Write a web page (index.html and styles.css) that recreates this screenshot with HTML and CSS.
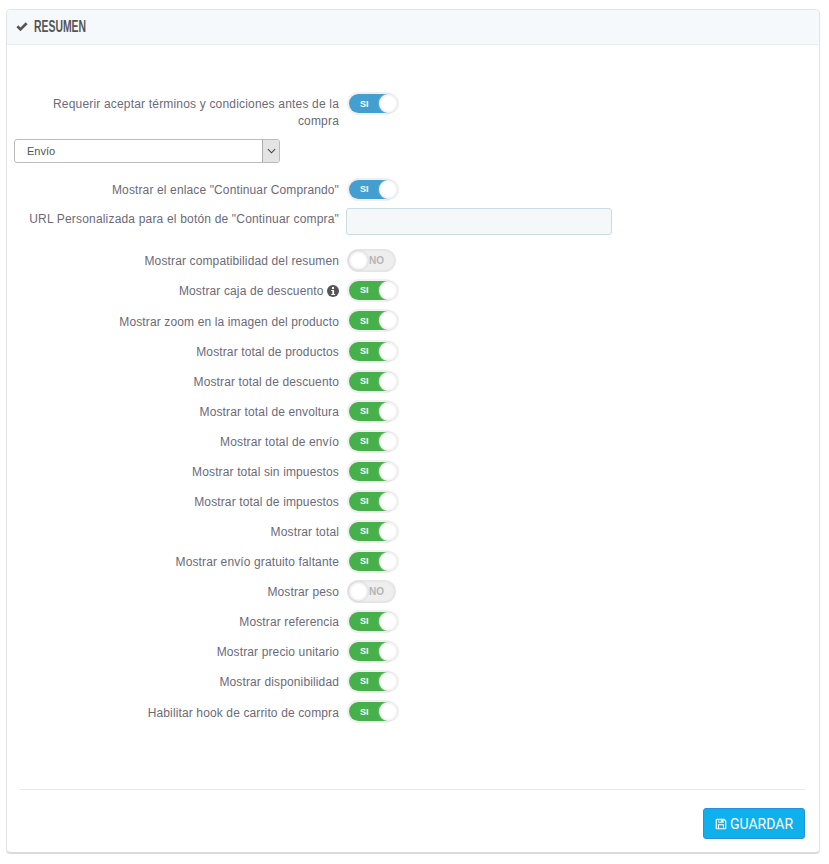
FILE: index.html
```html
<!DOCTYPE html>
<html lang="es">
<head>
<meta charset="utf-8">
<title>Resumen</title>
<link rel="stylesheet" href="styles.css">
</head>
<body>
<section class="panel">
  <header class="panel-head">
    <svg class="check" viewBox="0 0 14 11" width="12" height="10"><path d="M0.5 5.8 L2.7 3.6 L5.2 6.1 L11.3 0 L13.5 2.2 L5.2 10.5 Z" fill="#555"/></svg>
    <h2>RESUMEN</h2>
  </header>
  <form class="form">
    <div class="row row-first"><label class="label label-wide">Requerir aceptar términos y condiciones antes de la compra</label><span class="switch blue"><b>SI</b><i></i></span></div>
    <div class="select"><span>Envío</span><span class="select-btn"><svg viewBox="0 0 10 6" width="9" height="6"><path d="M1 1 L5 5 L9 1" fill="none" stroke="#444" stroke-width="1.2"/></svg></span></div>
    <div class="row row-c"><label class="label">Mostrar el enlace "Continuar Comprando"</label><span class="switch blue"><b>SI</b><i></i></span></div>
    <div class="row row-url"><label class="label label-wide">URL Personalizada para el botón de "Continuar compra"</label><span class="input"></span></div>
    <div class="row"><label class="label">Mostrar compatibilidad del resumen</label><span class="switch off"><i></i><b>NO</b></span></div>
    <div class="row"><label class="label">Mostrar caja de descuento <svg class="info" viewBox="0 0 12 12" width="12" height="12"><circle cx="6" cy="6" r="6" fill="#555"/><rect x="5" y="2" width="2" height="2" fill="#fff"/><path d="M4.3 5h2.8v4h1v1H4.3V9h1V6h-1z" fill="#fff"/></svg></label><span class="switch"><b>SI</b><i></i></span></div>
    <div class="row row-31"><label class="label">Mostrar zoom en la imagen del producto</label><span class="switch"><b>SI</b><i></i></span></div>
    <div class="row"><label class="label">Mostrar total de productos</label><span class="switch"><b>SI</b><i></i></span></div>
    <div class="row"><label class="label">Mostrar total de descuento</label><span class="switch"><b>SI</b><i></i></span></div>
    <div class="row"><label class="label">Mostrar total de envoltura</label><span class="switch"><b>SI</b><i></i></span></div>
    <div class="row"><label class="label">Mostrar total de envío</label><span class="switch"><b>SI</b><i></i></span></div>
    <div class="row"><label class="label">Mostrar total sin impuestos</label><span class="switch"><b>SI</b><i></i></span></div>
    <div class="row"><label class="label">Mostrar total de impuestos</label><span class="switch"><b>SI</b><i></i></span></div>
    <div class="row"><label class="label">Mostrar total</label><span class="switch"><b>SI</b><i></i></span></div>
    <div class="row"><label class="label">Mostrar envío gratuito faltante</label><span class="switch"><b>SI</b><i></i></span></div>
    <div class="row"><label class="label">Mostrar peso</label><span class="switch off"><i></i><b>NO</b></span></div>
    <div class="row"><label class="label">Mostrar referencia</label><span class="switch"><b>SI</b><i></i></span></div>
    <div class="row"><label class="label">Mostrar precio unitario</label><span class="switch"><b>SI</b><i></i></span></div>
    <div class="row"><label class="label">Mostrar disponibilidad</label><span class="switch"><b>SI</b><i></i></span></div>
    <div class="row row-31"><label class="label">Habilitar hook de carrito de compra</label><span class="switch"><b>SI</b><i></i></span></div>
  </form>
  <footer class="panel-foot">
    <button class="save" type="button"><svg viewBox="0 0 14 14" width="12" height="12"><path fill-rule="evenodd" d="M2 .8h8.7L13.2 3.3V12a1.2 1.2 0 0 1-1.2 1.2H2A1.2 1.2 0 0 1 .8 12V2A1.2 1.2 0 0 1 2 .8zm.2 1.2v10h1.3V7.4h7V12h1.3V3.9L10.2 2H10v3.6H4V2zm2.7 0v2.6h1.8V2zm-.2 6.6V12h4.6V8.6z" fill="#fff"/></svg>GUARDAR</button>
  </footer>
</section>
</body>
</html>
```
FILE: styles.css
```css
* { box-sizing: border-box; }
html, body { margin: 0; background: #fff; }
body { padding: 9px 9px 0 6px; font-family: "Liberation Sans", Arial, sans-serif; font-size: 12px; color: #6c6a78; }
.panel {
  height: 845px; display: flex; flex-direction: column;
  border: 1px solid #e2e5e8; border-bottom: 2px solid #d9dbdd; border-radius: 5px;
  box-shadow: 0 1px 1px #e6e6e6; background: #fff;
}
.panel-head {
  height: 35px; flex: none; display: flex; align-items: center; gap: 6px;
  padding-left: 9px; background: #f6f9fb; border-bottom: 1px solid #e8edef; border-radius: 5px 5px 0 0;
}
.panel-head h2 {
  margin: 0; font-family: "Liberation Sans", sans-serif;
  font-size: 16px; font-weight: 700; color: #555;
  transform: scaleX(.65); transform-origin: left center;
}
.form { flex: 1; display: flex; flex-direction: column; padding-top: 49px; }
.row { display: flex; align-items: center; height: 30px; flex: none; }
.row-31 { height: 31px; }
.row-first { height: 45px; align-items: flex-start; }
.row-c { height: 30px; margin-top: 11px; }
.row-url { height: 34px; margin-bottom: 7px; align-items: flex-start; padding-top: 4px; }
.label {
  width: 325px; margin: 2px 0 0 7px; padding-left: 2px; text-align: right; line-height: 17px;
  letter-spacing: .13px;
}
.label-wide { letter-spacing: .18px; }
.row-url .label { margin-top: 3px; }
.row-31 .label { margin-top: 3px; }
.info { vertical-align: -2px; }
.switch {
  margin-left: 10px; width: 45px; height: 19px; border-radius: 10px; position: relative;
  display: flex; align-items: center; padding-left: 11px;
  background: #46b04a; box-shadow: 0 0 0 2px #f0f0f0;
  font-size: 9px; color: #fff;
}
.switch b { font-weight: 700; }
.switch i {
  position: absolute; left: 30px; top: 0; width: 19px; height: 19px; border-radius: 50%;
  background: #fff; box-shadow: 0 0 2px #c4c4c4; border: 2px solid #f4f4f4;
}
.switch.blue { background: #429fd0; }
.switch.off { background: #eee; color: #b5b5b5; padding-left: 20px; box-shadow: 0 0 0 2px #e6e6e6; font-size: 10px; }
.switch.off i { left: 0; }
.select {
  width: 266px; height: 24px; margin-left: 7px; flex: none; display: flex; justify-content: space-between; align-items: center;
  padding-left: 12px; border: 1px solid #bbb; border-radius: 3px; font-size: 11px; color: #555; background: #fff;
}
.select-btn {
  width: 17px; height: 22px; display: flex; align-items: center; justify-content: center;
  background: #e4e4e4; border-left: 1px solid #aaa; border-radius: 0 2px 2px 0;
}
.input {
  margin-left: 7px; width: 266px; height: 27px; background: #f5f8f9;
  border: 1px solid #c9dde3; border-radius: 3px;
}
.panel-foot {
  margin: 0 14px 0 13px; height: 63px; flex: none; display: flex; justify-content: flex-end; align-items: flex-start;
  padding-top: 18px; border-top: 1px solid #e9e9e9;
}
.save {
  width: 102px; height: 31px; display: flex; align-items: center; justify-content: center; gap: 3px;
  background: #0fb0ee; border: 1px solid #2a8fd8; border-radius: 3px;
  color: #fff; font-family: Roboto, sans-serif; font-size: 14px; padding: 0;
}
```
